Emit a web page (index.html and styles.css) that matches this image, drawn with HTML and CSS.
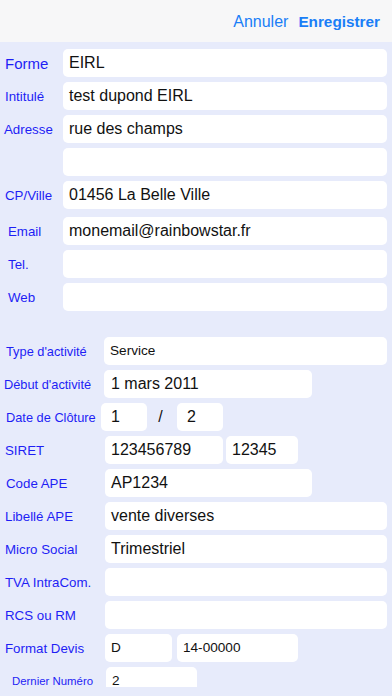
FILE: index.html
```html
<!DOCTYPE html>
<html lang="fr">
<head>
<meta charset="utf-8">
<title>Fiche société</title>
<link rel="stylesheet" href="styles.css">
</head>
<body>
<header class="topbar">
  <span class="btn">Annuler</span>
  <span class="btn btn-strong">Enregistrer</span>
</header>
<main class="form">
  <div class="row row-a"><span class="label label-big">Forme</span><span class="field grow">EIRL</span></div>
  <div class="row row-a"><span class="label">Intitulé</span><span class="field grow">test dupond EIRL</span></div>
  <div class="row row-a"><span class="label pl4">Adresse</span><span class="field grow">rue des champs</span></div>
  <div class="row row-a"><span class="label"></span><span class="field grow"></span></div>
  <div class="row row-a"><span class="label">CP/Ville</span><span class="field grow">01456 La Belle Ville</span></div>
  <div class="row row-a mt3"><span class="label pl8">Email</span><span class="field grow">monemail@rainbowstar.fr</span></div>
  <div class="row row-a"><span class="label pl8">Tel.</span><span class="field grow"></span></div>
  <div class="row row-a"><span class="label pl8">Web</span><span class="field grow"></span></div>

  <div class="row row-b mt-section"><span class="label label-sm pl6 w104">Type d'activité</span><span class="field grow small">Service</span></div>
  <div class="row row-b"><span class="label label-sm pl4 w104">Début d'activité</span><span class="field w208 p7">1 mars 2011</span></div>
  <div class="row row-b"><span class="label label-sm pl6 w101">Date de Clôture</span><span class="field w46 p10">1</span><span class="slash">/</span><span class="field w46 p10">2</span></div>
  <div class="row row-b"><span class="label">SIRET</span><span class="field w118">123456789</span><span class="field w72 ml3">12345</span></div>
  <div class="row row-b"><span class="label pl6">Code APE</span><span class="field w207">AP1234</span></div>
  <div class="row row-b"><span class="label">Libellé APE</span><span class="field grow">vente diverses</span></div>
  <div class="row row-b"><span class="label">Micro Social</span><span class="field grow">Trimestriel</span></div>
  <div class="row row-b"><span class="label">TVA IntraCom.</span><span class="field grow"></span></div>
  <div class="row row-b"><span class="label">RCS ou RM</span><span class="field grow"></span></div>
  <div class="row row-b"><span class="label">Format Devis</span><span class="field w67 small">D</span><span class="field w121 ml5 small">14-00000</span></div>
  <div class="row row-b"><span class="label label-xs pl12 w106">Dernier Numéro</span><span class="field w91 small">2</span></div>
</main>
</body>
</html>
```

FILE: styles.css
```css
html, body {
  margin: 0;
  padding: 0;
}

body {
  background: #e7ebfb;
  font-family: "Liberation Sans", Arial, sans-serif;
  width: 392px;
  height: 696px;
  overflow: hidden;
}

.topbar {
  height: 42px;
  box-sizing: border-box;
  background: #f7f7f8;
  display: flex;
  justify-content: flex-end;
  align-items: flex-end;
  gap: 10px;
  padding: 0 12px 11px 0;
}

.btn {
  color: #1a7ef7;
  font-size: 16px;
  line-height: 18px;
}

.btn-strong {
  font-weight: bold;
  font-size: 15.3px;
}

.form {
  height: 645px;
  box-sizing: border-box;
  overflow: hidden;
  padding-top: 7px;
  display: flex;
  flex-direction: column;
  gap: 5px;
}

.row {
  display: flex;
  align-items: center;
  height: 28px;
  flex: none;
}

.mt3 { margin-top: 3px; }
.mt-section { margin-top: 21px; }

.label {
  flex: none;
  box-sizing: border-box;
  padding-left: 5px;
  color: #1e1ef5;
  font-size: 13.3px;
  white-space: nowrap;
}

.row-a .label { width: 63px; }
.row-b .label { width: 105px; }
.row-b .w104 { width: 104px; }
.row-b .w101 { width: 101px; }
.row-b .w106 { width: 106px; }

.label-big { font-size: 15px; }
.label-sm { font-size: 12.8px; }
.label-xs { font-size: 11.4px; }

.pl4 { padding-left: 4px; }
.pl6 { padding-left: 6px; }
.pl8 { padding-left: 8px; }
.pl12 { padding-left: 12px; }

.field {
  flex: none;
  box-sizing: border-box;
  height: 28px;
  line-height: 28px;
  background: #ffffff;
  border-radius: 5px;
  padding: 0 6px;
  font-size: 16px;
  color: #111111;
  white-space: nowrap;
  overflow: hidden;
}

.field.grow {
  flex: 1;
  margin-right: 5px;
}

.field.small { font-size: 13.6px; }
.p7 { padding-left: 7px; }
.p10 { padding-left: 10px; }

.w46 { width: 46px; }
.w67 { width: 67px; }
.w72 { width: 72px; }
.w91 { width: 91px; }
.w118 { width: 118px; }
.w121 { width: 121px; }
.w207 { width: 207px; }
.w208 { width: 208px; }

.ml3 { margin-left: 3px; }
.ml5 { margin-left: 5px; }

.slash {
  flex: none;
  width: 30px;
  text-align: center;
  font-size: 16px;
  color: #111111;
  padding-right: 3px;
  box-sizing: border-box;
}
```
